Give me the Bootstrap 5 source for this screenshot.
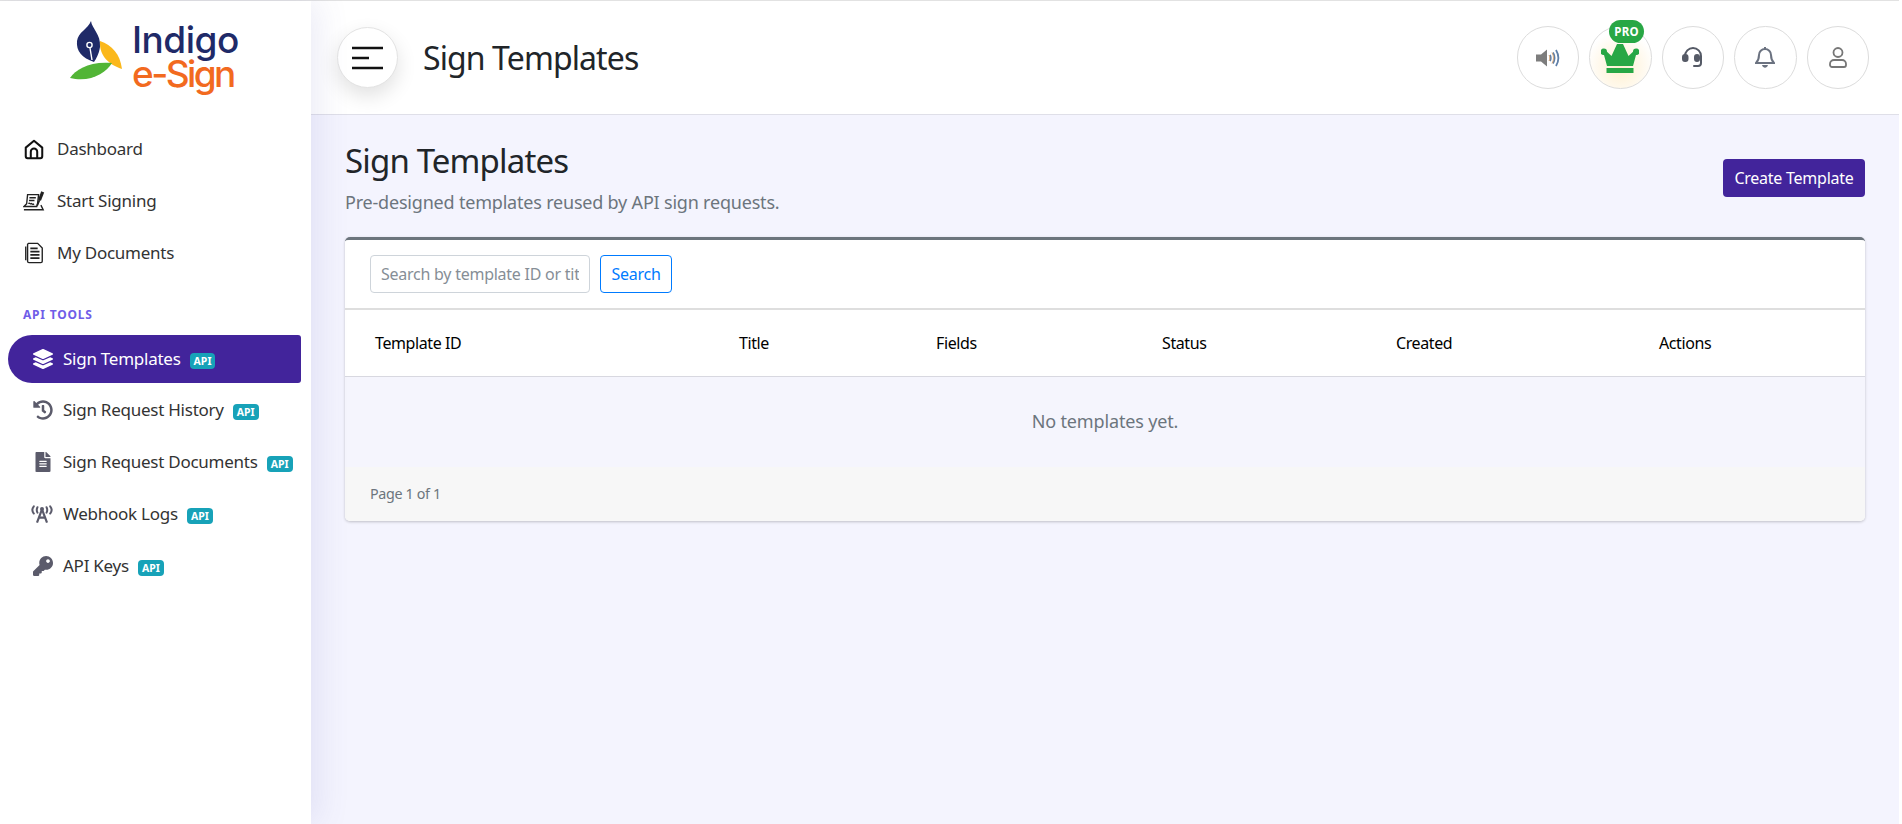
<!DOCTYPE html>
<html lang="en"><head><meta charset="utf-8"><title>Sign Templates</title>
<link rel="stylesheet" href="https://cdn.jsdelivr.net/npm/bootstrap@5.3.0/dist/css/bootstrap.min.css">
<style>
html,body{height:100%;overflow:hidden}
body{font-family:"Noto Sans",sans-serif;font-size:16px;letter-spacing:-.25px;background:#fff;color:#212529}
.app-shell{height:824px;border-top:1px solid #e2e2e2;width:1899px}
.side-bar{width:311px;flex:none;background:#fff;position:relative;z-index:5;box-shadow:8px 0 30px rgba(80,80,170,.11)}
.brand{height:122px;padding:20px 0 0 70px}
.brand-text{font-family:"Inter",sans-serif;font-weight:500;font-size:37px;line-height:34px;margin:2px 0 0 10px}
.brand-a{color:#1f2a68;letter-spacing:-.5px}.brand-b{color:#f26a1f;letter-spacing:-2.6px}
.side-link{height:52px;display:flex;align-items:center;color:#333;text-decoration:none;padding-left:23px;font-size:17px}
.side-link svg{width:22px;height:22px;margin-right:12px;flex:none}
.side-head{font-size:12px;font-weight:700;letter-spacing:.8px;color:#6f5de8;padding-left:23px;margin:28px 0 12px;line-height:16px}
.api-link{height:52px;display:flex;align-items:center;color:#333;text-decoration:none;margin:0 10px 0 8px;padding-left:25px;font-size:17px}
.api-link svg{width:20px;height:20px;margin-right:10px;flex:none;fill:#5b5b6b}
.api-link.is-on{height:48px;margin-bottom:1px;background:#42249b;color:#fff;border-radius:24px 3px 3px 24px}
.api-link.is-on svg{fill:#fff}
.api-link svg.tower-icon{width:26px;margin-left:-4px;margin-right:8px}
.tag-api{background:#17a2b8;color:#fff;font-size:10.5px;font-weight:700;letter-spacing:0;line-height:14px;padding:1px 4px;border-radius:4px;margin-left:9px;margin-top:3px}
.main-col{background:#f4f4fe;min-width:0}
.top-bar{height:114px;background:#fff;border-bottom:1px solid #dfdfe8;padding:0 30px 0 26px}
.burger{width:61px;height:61px;border-radius:50%;background:#fff;border:1px solid #e3e3e3;box-shadow:0 8px 20px rgba(0,0,0,.12);padding:0}
.top-title{font-size:32px;font-weight:400;margin:2px 0 0 25px;letter-spacing:-.9px;line-height:1.2}
.icon-row{column-gap:10px}
.round-btn{width:62.5px;height:62.5px;border-radius:50%;background:#fff;border:1px solid #dcdcdc;padding:0;position:relative}
.round-btn.glow{background:radial-gradient(circle at 50% 65%,#fff0d0 0,#fff8ea 40%,#fff 70%)}
.crown-icon{margin-top:2px}
.pro-pill{position:absolute;top:-7px;left:19px;background:#28a745;color:#fff;font-size:11.5px;font-weight:700;letter-spacing:.2px;line-height:23px;height:23px;width:35px;border-radius:12px;text-align:center}
.page-body{padding:25px 34px 0}
.page-title{font-size:33px;font-weight:400;letter-spacing:-.85px;line-height:42px;margin:0}
.page-sub{color:#6c757d;font-size:18px;letter-spacing:-.2px;line-height:24px;margin:8px 0 0}
.make-btn{background:#42249b;color:#fff;border:0;border-radius:4px;height:38px;width:142px;font-size:16px;letter-spacing:-.25px;padding:0;margin-top:19px}
.tpl-card{margin-top:23px;border:0;border-top:3px solid #6c757d;border-radius:5px;box-shadow:0 1px 3px rgba(0,0,0,.22);overflow:hidden;background:#fff}
.tool-row{height:70px;padding:15px 25px;border-bottom:2px solid #dedede;background:#fff}
.find-input{width:220px;height:38px;border:1px solid #ced4da;border-radius:4px;font-size:16px;letter-spacing:-.25px;padding:0 10px;color:#495057}
.find-input::placeholder{color:#868e96}
.find-btn{width:72px;height:38px;margin-left:10px;border:1px solid #007bff;color:#007bff;background:#fff;border-radius:4px;font-size:16px;letter-spacing:-.25px;padding:0}
.tpl-table{table-layout:fixed;margin:0;width:100%;--bs-table-bg:transparent}
.tpl-table th{font-weight:400;color:#000;font-size:16px;letter-spacing:-.4px;height:66px;padding:0;vertical-align:middle;border-bottom:1px solid #d8d8e0;background:#fff}
.tpl-table th:first-child{padding-left:30px}
.tpl-table td{height:91px;padding:0;text-align:center;color:#6c757d;font-size:18px;letter-spacing:-.15px;background:#f5f5fd;border:0;vertical-align:middle}
.pager{height:54px;background:#f7f7f7;padding:0 25px;display:flex;align-items:center;color:#6c757d;font-size:14.3px;letter-spacing:-.35px}
.c1{width:394px}.c2{width:197px}.c3{width:226px}.c4{width:234px}.c5{width:263px}
</style></head>
<body>
<div class="app-shell d-flex">
<aside class="side-bar">
 <div class="brand d-flex align-items-start">
  <svg width="52" height="61" viewBox="0 0 52 61">
   <path fill="#1f2a68" d="M21 0C22 8 31 13 30 26C29 33 26 38 24 41C12 37 6 30 7 20C8 11 18 8 21 0Z"/>
   <path fill="none" stroke="#fff" stroke-width="1.4" d="M22 39 20 27"/><circle cx="19.500" cy="24" r="2.600" fill="none" stroke="#fff" stroke-width="1.400"/>
   <path fill="#fbb81b" d="M30 20C42 24 50 33 52 48C40 44 29 36 30 20Z"/>
   <path fill="#52b536" d="M0 57C6 48 20 40 42 42C36 52 20 62 0 57Z"/>
  </svg>
  <div class="brand-text"><div class="brand-a">Indigo</div><div class="brand-b">e-Sign</div></div>
 </div>
 <a class="side-link" href="#"><svg viewBox="0 0 24 24" fill="none" stroke="#111" stroke-width="2.200"><path d="M3 10.500 12 3l9 7.500V20a2 2 0 0 1-2 2H5a2 2 0 0 1-2-2Z" stroke-linejoin="round"/><path d="M8.500 22v-7a3.500 3.500 0 0 1 7 0v7"/></svg>Dashboard</a>
 <a class="side-link" href="#"><svg viewBox="0 0 24 24" fill="none" stroke="#222" stroke-width="1.500"><path d="M5 5h12l-1 9-1 4H1l3-3Z"/><path d="M1 21.500h21l-2.500-5M7 8.500h7M6.500 11.500h6M6 15c1-2 2 1 3 0s1 2 3 0"/><path stroke-width="3.400" d="M21.500 2 18 11"/><path stroke-width="1.800" d="M18 11l-2.500 6"/></svg>Start Signing</a>
 <a class="side-link" href="#"><svg viewBox="0 0 24 24" fill="none" stroke="#222" stroke-width="1.500"><path d="M6 1.500h10l5 5V21a1.500 1.500 0 0 1-1.500 1.500h-13A1.500 1.500 0 0 1 5 21V2.500Z"/><path stroke-width="2" d="M8 7h8M8 10.500h10M8 14h10M8 17.500h10"/><path d="M3 5v15"/></svg>My Documents</a>
 <div class="side-head">API TOOLS</div>
 <a class="api-link is-on" href="#"><svg viewBox="0 0 512 512"><path d="M12.41 148.02l232.94 105.67c6.8 3.09 14.49 3.09 21.29 0l232.94-105.67c16.55-7.51 16.55-32.52 0-40.03L266.65 2.31a25.607 25.607 0 0 0-21.29 0L12.41 107.98c-16.55 7.51-16.55 32.53 0 40.04zm487.18 88.28l-58.09-26.33-161.64 73.27c-7.56 3.43-15.59 5.17-23.86 5.17s-16.29-1.74-23.86-5.17L70.51 209.97l-58.1 26.33c-16.55 7.5-16.55 32.5 0 40l232.94 105.59c6.8 3.08 14.49 3.08 21.29 0L499.59 276.3c16.55-7.5 16.55-32.5 0-40zm0 127.8l-57.87-26.23-161.86 73.37c-7.56 3.43-15.59 5.17-23.86 5.17s-16.29-1.74-23.86-5.17L70.29 337.87 12.41 364.1c-16.55 7.5-16.55 32.5 0 40l232.94 105.59c6.8 3.08 14.49 3.08 21.29 0L499.59 404.1c16.55-7.5 16.55-32.5 0-40z"/></svg>Sign Templates<span class="tag-api">API</span></a>
 <a class="api-link" href="#"><svg viewBox="0 0 512 512"><path d="M504 255.531c.253 136.64-111.18 248.372-247.82 248.468-59.015.042-113.223-20.53-155.822-54.911-11.077-8.94-11.905-25.541-1.839-35.607l11.267-11.267c8.609-8.609 22.353-9.551 31.891-1.984C173.062 425.135 212.781 440 256 440c101.705 0 184-82.311 184-184 0-101.705-82.311-184-184-184-48.814 0-93.149 18.969-126.068 49.932l50.754 50.754c10.08 10.08 2.941 27.314-11.313 27.314H24c-8.837 0-16-7.163-16-16V38.627c0-14.254 17.234-21.393 27.314-11.314l49.372 49.372C129.209 34.136 189.552 8 256 8c136.81 0 247.747 110.78 248 247.531zm-180.912 78.784l9.823-12.63c8.138-10.463 6.253-25.542-4.21-33.679L288 256.349V152c0-13.255-10.745-24-24-24h-16c-13.255 0-24 10.745-24 24v135.651l65.409 50.874c10.463 8.137 25.541 6.253 33.679-4.21z"/></svg>Sign Request History<span class="tag-api">API</span></a>
 <a class="api-link" href="#"><svg viewBox="0 0 384 512"><path d="M224 136V0H24C10.7 0 0 10.7 0 24v464c0 13.3 10.7 24 24 24h336c13.3 0 24-10.7 24-24V160H248c-13.2 0-24-10.8-24-24zm64 236c0 6.6-5.4 12-12 12H108c-6.6 0-12-5.4-12-12v-8c0-6.6 5.4-12 12-12h168c6.6 0 12 5.4 12 12v8zm0-64c0 6.6-5.4 12-12 12H108c-6.6 0-12-5.4-12-12v-8c0-6.6 5.4-12 12-12h168c6.6 0 12 5.4 12 12v8zm0-72v8c0 6.6-5.4 12-12 12H108c-6.6 0-12-5.4-12-12v-8c0-6.6 5.4-12 12-12h168c6.6 0 12 5.4 12 12zm96-114.1v6.1H256V0h6.1c6.4 0 12.5 2.5 17 7l97.9 98c4.5 4.500 7 10.6 7 16.9z"/></svg>Sign Request Documents<span class="tag-api">API</span></a>
 <a class="api-link" href="#"><svg class="tower-icon" viewBox="0 0 26 22"><path fill="none" stroke="#5b5b6b" stroke-width="2.200" stroke-linecap="round" d="M4 2.500C2 5 2 8 4 10.500M8 3.500c-1 2-1 4 0 6M22 2.500c2 2.500 2 5.500 0 8M18 3.500c1 2 1 4 0 6"/><circle cx="13" cy="5.500" r="2.200" fill="#5b5b6b"/><path fill="none" stroke="#5b5b6b" stroke-width="2.400" d="M13 6 7.500 20.500M13 6l5.500 14.500M9.500 15h7"/></svg>Webhook Logs<span class="tag-api">API</span></a>
 <a class="api-link" href="#"><svg viewBox="0 0 512 512"><path d="M512 176.001C512 273.203 433.202 352 336 352c-11.22 0-22.19-1.062-32.827-3.069l-24.012 27.014A23.999 23.999 0 0 1 261.223 384H224v40c0 13.255-10.745 24-24 24h-40v40c0 13.255-10.745 24-24 24H24c-13.255 0-24-10.745-24-24v-78.059c0-6.365 2.529-12.47 7.029-16.971l161.802-161.802C163.108 213.814 160 195.271 160 176 160 78.798 238.797.001 335.999 0 433.488-.001 512 78.511 512 176.001zM336 128c0 26.51 21.49 48 48 48s48-21.49 48-48-21.49-48-48-48-48 21.49-48 48z"/></svg>API Keys<span class="tag-api">API</span></a>
</aside>
<div class="main-col flex-grow-1 d-flex flex-column">
 <header class="top-bar d-flex align-items-center">
  <button class="burger d-flex align-items-center justify-content-center" aria-label="Menu"><svg width="31" height="24" viewBox="0 0 31 24"><path stroke="#111" stroke-width="2.500" d="M0 2h31M0 12h17M0 22h31"/></svg></button>
  <h2 class="top-title">Sign Templates</h2>
  <div class="ms-auto d-flex icon-row align-items-center">
   <button class="round-btn d-flex align-items-center justify-content-center" aria-label="Sound"><svg width="24" height="20" viewBox="0 0 24 20"><path fill="#7d7d7d" d="M0 6.500h5L11 1.500v17L5 13.500H0Z"/><path fill="none" stroke="#5f7fa8" stroke-width="1.800" d="M14 7c1 2 1 4 0 6M17 4.500c2 3.500 2 7.500 0 11M20 2c3 5 3 11 0 16"/><path fill="none" stroke="#e0a060" stroke-width=".8" d="M13 7c1 2 1 4 0 6M16 4.500c2 3.500 2 7.500 0 11"/></svg></button>
   <button class="round-btn glow d-flex align-items-center justify-content-center" aria-label="Pro"><span class="pro-pill">PRO</span><svg class="crown-icon" width="38" height="30" viewBox="0 0 38 30"><path fill="#28a745" d="M16 0H22L27.500 12 32 7.800a3.200 3.200 0 1 1 3 3.200L32 22H6L3 11a3.200 3.200 0 1 1 3-3.200L10.500 12Z"/><rect x="5.500" y="24" width="27" height="5" fill="#28a745"/></svg></button>
   <button class="round-btn d-flex align-items-center justify-content-center" aria-label="Support"><svg width="22" height="21" viewBox="0 0 22 21" fill="none" stroke="#555a66" stroke-width="2"><path d="M3 9a8 8 0 0 1 16 0v7a3 3 0 0 1-3 3h-4" stroke-linecap="round"/><rect x="1" y="8" width="4.500" height="6" rx="2" fill="#555a66"/><rect x="13" y="8" width="4" height="6" rx="2" fill="#555a66"/></svg></button>
   <button class="round-btn d-flex align-items-center justify-content-center" aria-label="Notifications"><svg width="20" height="23" viewBox="0 0 20 23" fill="none" stroke="#6b7280" stroke-width="2"><path d="M10 3a6 6 0 0 1 6 6c0 5 1.500 6.500 3 8H1c1.500-1.500 3-3 3-8a6 6 0 0 1 6-6ZM10 1v2"/><path fill="#6b7280" stroke="none" d="M7 19h6c-1 3.500-5 3.500-6 0Z"/></svg></button>
   <button class="round-btn d-flex align-items-center justify-content-center" aria-label="Profile"><svg width="18" height="21" viewBox="0 0 18 21" fill="none" stroke="#777" stroke-width="1.800"><circle cx="9" cy="5.500" r="4.500"/><path d="M1 18v-1a4 4 0 0 1 4-4h8a4 4 0 0 1 4 4v1a2 2 0 0 1-2 2H3a2 2 0 0 1-2-2Z"/></svg></button>
  </div>
 </header>
 <main class="page-body">
  <div class="d-flex justify-content-between align-items-start">
   <div><h1 class="page-title">Sign Templates</h1><p class="page-sub">Pre-designed templates reused by API sign requests.</p></div>
   <button class="make-btn">Create Template</button>
  </div>
  <section class="tpl-card">
   <div class="tool-row d-flex"><input class="find-input" placeholder="Search by template ID or title"><button class="find-btn">Search</button></div>
   <table class="table tpl-table">
    <colgroup><col class="c1"><col class="c2"><col class="c3"><col class="c4"><col class="c5"><col></colgroup>
    <thead><tr><th>Template ID</th><th>Title</th><th>Fields</th><th>Status</th><th>Created</th><th>Actions</th></tr></thead>
    <tbody><tr><td colspan="6">No templates yet.</td></tr></tbody>
   </table>
   <div class="pager">Page 1 of 1</div>
  </section>
 </main>
</div>
</div>
<script src="https://cdn.jsdelivr.net/npm/bootstrap@5.3.0/dist/js/bootstrap.bundle.min.js"></script>
</body></html>
